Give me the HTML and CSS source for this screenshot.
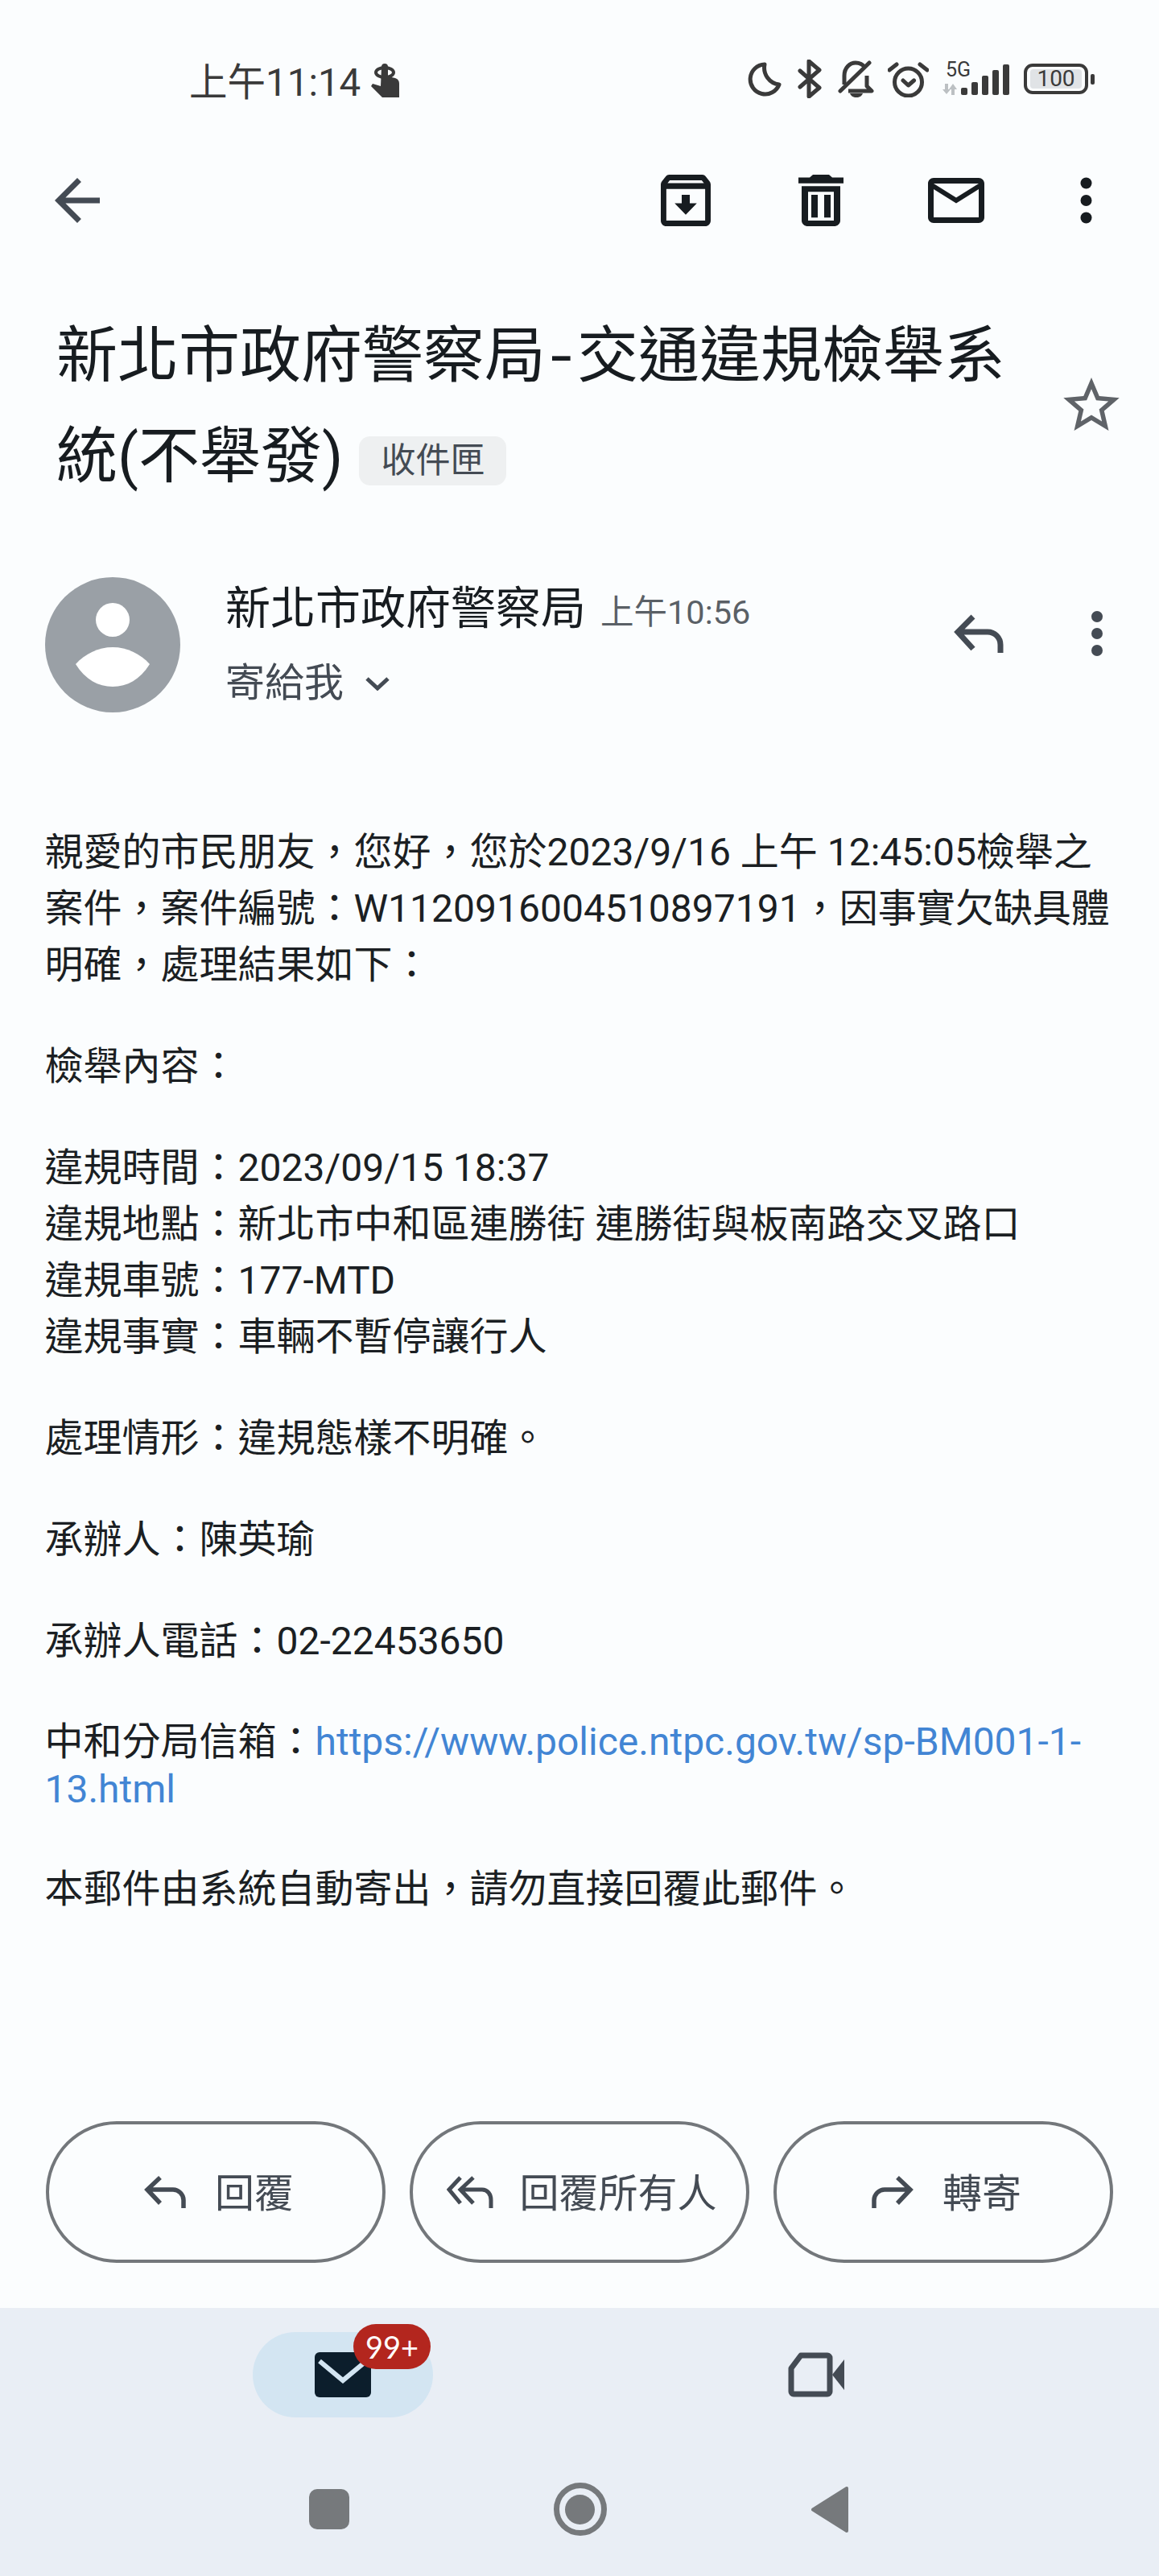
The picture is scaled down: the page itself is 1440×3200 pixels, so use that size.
FILE: index.html
```html
<!DOCTYPE html>
<html lang="zh-TW">
<head>
<meta charset="utf-8">
<title>新北市政府警察局-交通違規檢舉系統(不舉發)</title>
<link rel="stylesheet" href="styles.css">
</head>
<body>
<div class="screen">
  <header class="status">
    <div class="clock">上午11:14</div>
    <svg class="hand" viewBox="0 0 35 42" width="35" height="42"><ellipse cx="17" cy="11" rx="11" ry="6" fill="none" stroke="#3a3a3a" stroke-width="4"/><path fill="#3a3a3a" d="M13 4a4 4 0 0 1 8 0v12l9 2c3 1 5 3 5 7v17H14L0 28l2-3 10 3z"/></svg>
    <div class="status-icons">
      <svg class="si moon" viewBox="0 0 43 43" width="43" height="43"><path fill="none" stroke="#3a3a3a" stroke-width="5" stroke-linejoin="round" d="M22 3A18.500 18.500 0 1 0 40 28 21 21 0 0 1 22 3Z"/></svg>
      <svg class="si bt" viewBox="0 0 30 48" width="30" height="48"><path fill="none" stroke="#3a3a3a" stroke-width="5" stroke-linecap="round" stroke-linejoin="round" d="M3 14 27 35 14 46V2L27 13 3 34"/></svg>
      <svg class="si bell" viewBox="0 0 45 46" width="45" height="46"><path fill="none" stroke="#3a3a3a" stroke-width="5" stroke-linejoin="round" d="M8 30V19C8 9 15 3 22 3c5 0 9 2 12 6M36 19v13l6 6H13"/><path fill="none" stroke="#3a3a3a" stroke-width="5" stroke-linecap="round" d="M3 38 39 3"/><path fill="#3a3a3a" d="M15 41h16c-1 3-4 5-8 5s-7-2-8-5z"/></svg>
      <svg class="si alarm" viewBox="0 0 51 45" width="51" height="45"><circle cx="25.500" cy="26" r="17" fill="none" stroke="#3a3a3a" stroke-width="5"/><path fill="none" stroke="#3a3a3a" stroke-width="5" stroke-linecap="round" stroke-linejoin="round" d="M19 24l6.500 6 7-6M2 11l9-7M40 4l9 7"/></svg>
      <div class="net">
        <span class="g5">5G</span>
        <svg class="arrows" viewBox="0 0 20 14" width="20" height="14"><path fill="#bcc0c3" d="M4 0h4v7h3l-5 6-5-6h3zM12 14V7H9l5-7 5 7h-3v7z"/></svg>
        <svg class="bars" viewBox="0 0 60 38" width="60" height="38"><g fill="#3a3a3a"><rect x="0" y="29" width="8" height="9" rx="2"/><rect x="13" y="22" width="8" height="16" rx="2"/><rect x="26" y="14" width="8" height="24" rx="2"/><rect x="39" y="7" width="8" height="31" rx="2"/><rect x="52" y="0" width="8" height="38" rx="2"/></g></svg>
      </div>
      <div class="battery"><span class="batt-body"><span class="batt-fill">100</span></span><span class="batt-tip"></span></div>
    </div>
  </header>

  <nav class="toolbar">
    <svg class="back" viewBox="4 4 16 16" width="56" height="56"><path fill="#444b54" d="M20 11H7.830l5.590-5.590L12 4l-8 8 8 8 1.410-1.410L7.830 13H20v-2z"/></svg>
    <svg class="tb-archive" viewBox="3 3 18 18" width="62" height="64" preserveAspectRatio="none"><path fill="#171c20" d="M20.540 5.230l-1.390-1.680C18.880 3.210 18.470 3 18 3H6c-.47 0-.88.21-1.160.55L3.460 5.230C3.170 5.570 3 6.020 3 6.500V19c0 1.100.9 2 2 2h14c1.100 0 2-.9 2-2V6.500c0-.48-.17-.93-.46-1.270zM6.240 5h11.520l.81.97H5.440l.8-.97zM5 19V8h14v11H5zm8.450-9h-2.900v3H8l4 4 4-4h-2.550z"/></svg>
    <svg class="tb-trash" viewBox="5 3 14 18" width="56" height="64" preserveAspectRatio="none"><path fill="#171c20" d="M6 19c0 1.100.9 2 2 2h8c1.100 0 2-.9 2-2V7H6v12zM8 9h8v10H8V9zm7.500-5l-1-1h-5l-1 1H5v2h14V4zM9 10h2v8H9zM13 10h2v8h-2z"/></svg>
    <svg class="tb-mail" viewBox="2 4 20 16" width="70" height="56"><path fill="#171c20" d="M20 4H4c-1.100 0-2 .9-2 2v12c0 1.100.9 2 2 2h16c1.100 0 2-.9 2-2V6c0-1.100-.9-2-2-2zm0 14H4V8l8 5 8-5v10zm-8-7L4 6h16l-8 5z"/></svg>
    <svg class="tb-dots" viewBox="0 0 15 58" width="15" height="58"><g fill="#171c20"><circle cx="7.500" cy="7.500" r="7"/><circle cx="7.500" cy="29" r="7"/><circle cx="7.500" cy="50.500" r="7"/></g></svg>
  </nav>

  <section class="subject">
    <h1 class="title">新北市政府警察局<span class="hyphen">-</span>交通違規檢舉系統(不舉發)<span class="label">收件匣</span></h1>
    <svg class="star" viewBox="2 2 20 19" width="70" height="66"><path fill="#5f6368" d="M22 9.240l-7.190-.62L12 2 9.190 8.630 2 9.240l5.460 4.730L5.820 21 12 17.270 18.180 21l-1.630-7.030L22 9.240zM12 15.400l-3.760 2.270 1-4.280-3.320-2.880 4.380-.38L12 6.100l1.710 4.040 4.380.38-3.320 2.880 1 4.280L12 15.400z"/></svg>
  </section>

  <section class="sender">
    <svg class="avatar" viewBox="0 0 168 168" width="168" height="168"><circle cx="84" cy="84" r="84" fill="#9aa0a6"/><circle cx="84" cy="53" r="21" fill="#fff"/><path fill="#fff" d="M38 108C50 95 66 87 84 87s34 8 46 21c-12 19-28 28-46 28s-34-9-46-28z"/></svg>
    <div class="sender-info">
      <div class="sender-top"><span class="sender-name">新北市政府警察局</span><span class="sender-time">上午10:56</span></div>
      <div class="sender-to"><span>寄給我</span><svg class="chev" viewBox="0 0 30 18" width="30" height="18"><path fill="none" stroke="#444b54" stroke-width="5" d="M2 3l13 12L28 3"/></svg></div>
    </div>
    <svg class="msg-reply" viewBox="0 0 62 48" width="62" height="48"><path fill="none" stroke="#444b54" stroke-width="7" d="M24 3 5 22l19 21M5 22h37c9 0 16 7 16 16v10"/></svg>
    <svg class="msg-dots" viewBox="0 0 14 56" width="14" height="56"><g fill="#444b54"><circle cx="7" cy="7" r="7"/><circle cx="7" cy="28" r="7"/><circle cx="7" cy="49" r="7"/></g></svg>
  </section>

  <main class="body">
    <p>親愛的市民朋友，您好，您於2023/9/16 上午 12:45:05檢舉之案件，案件編號：W1120916004510897191，因事實欠缺具體明確，處理結果如下：</p>
    <p>檢舉內容：</p>
    <p>違規時間：2023/09/15 18:37<br>違規地點：新北市中和區連勝街 連勝街與板南路交叉路口<br>違規車號：177-MTD<br>違規事實：車輛不暫停讓行人</p>
    <p>處理情形：違規態樣不明確。</p>
    <p>承辦人：陳英瑜</p>
    <p>承辦人電話：02-22453650</p>
    <p class="link-para">中和分局信箱：<a class="link" href="#">https://www.police.ntpc.gov.tw/sp-BM001-1-13.html</a></p>
    <p>本郵件由系統自動寄出，請勿直接回覆此郵件。</p>
  </main>

  <section class="actions">
    <div class="btn"><svg viewBox="0 0 52 41" width="52" height="41"><path fill="none" stroke="#444b54" stroke-width="5.500" d="M20 3 4 18l16 17M4 18h32c7 0 13 6 13 13v10"/></svg><span>回覆</span></div>
    <div class="btn btn-all"><svg viewBox="0 0 58 41" width="58" height="41"><path fill="none" stroke="#444b54" stroke-width="5" d="M17 3 3 18l14 17M33 3 17 18l16 17M17 18h27c7 0 11 6 11 13v10"/></svg><span>回覆所有人</span></div>
    <div class="btn"><svg viewBox="0 0 52 41" width="52" height="41"><path fill="none" stroke="#444b54" stroke-width="5.500" d="M32 3l16 15-16 17M48 18H16C9 18 3 24 3 31v10"/></svg><span>轉寄</span></div>
  </section>

  <footer class="bottom">
    <div class="tabs">
      <div class="tab">
        <div class="pill">
          <svg viewBox="0 0 70 56" width="70" height="56"><rect width="70" height="56" rx="6" fill="#0c1e2c"/><path fill="none" stroke="#d3e5f2" stroke-width="6" d="M6 11l29 24 29-24"/></svg>
          <span class="badge">99+</span>
        </div>
      </div>
      <div class="tab">
        <svg viewBox="0 0 70 56" width="70" height="56"><path fill="none" stroke="#444b54" stroke-width="7" stroke-linejoin="round" d="M16 4h33a3 3 0 0 1 3 3v42a3 3 0 0 1-3 3H7a3 3 0 0 1-3-3V20z"/><path fill="#444b54" d="M55 28 70 9v38z"/></svg>
      </div>
    </div>
    <div class="sysnav">
      <span class="sys-square"></span>
      <span class="sys-home"><span class="sys-home-dot"></span></span>
      <svg viewBox="0 0 46 57" width="46" height="57"><path fill="#76797c" stroke="#76797c" stroke-width="4" stroke-linejoin="round" d="M2 28.500 44 2v53z"/></svg>
    </div>
  </footer>
</div>
</body>
</html>
```

FILE: styles.css
```css
* { box-sizing: border-box; }
html, body { margin: 0; padding: 0; }
body {
  background: #fbfdfe;
  font-family: Roboto, "Noto Sans CJK TC", sans-serif;
  color: #1b1f23;
}
.screen {
  width: 1440px;
  height: 3200px;
  display: flex;
  flex-direction: column;
  overflow: hidden;
}
svg { display: block; flex: none; }

/* status bar */
.status {
  height: 189px;
  display: flex;
  align-items: flex-start;
  padding: 70px 80px 0 235px;
}
.clock {
  margin-top: 3px;
  font-size: 47.500px;
  line-height: 60px;
  color: #3a3a3a;
}
.hand { margin: 9px 0 0 13px; }
.status-icons {
  margin-left: auto;
  display: flex;
  align-items: center;
  height: 56px;
}
.bt { margin-left: 20px; }
.bell { margin-left: 20px; }
.alarm { margin-left: 17px; }
.net {
  position: relative;
  width: 84px;
  height: 46px;
  margin-left: 16px;
}
.g5 {
  position: absolute;
  left: 5px;
  top: 0;
  font-size: 25px;
  line-height: 24px;
  color: #3a3a3a;
}
.arrows { position: absolute; left: 0; top: 29px; }
.bars { position: absolute; left: 24px; top: 5px; }
.battery {
  display: flex;
  align-items: center;
  margin-left: 18px;
}
.batt-body {
  width: 80px;
  height: 38px;
  border: 4px solid #3a3a3a;
  border-radius: 11px;
  padding: 3px 4px;
  display: flex;
}
.batt-fill {
  flex: 1;
  background: #e0e3e6;
  border-radius: 4px;
  font-size: 28px;
  line-height: 24px;
  text-align: center;
  color: #3a3a3a;
}
.batt-tip {
  width: 5px;
  height: 13px;
  margin-left: 3px;
  background: #3a3a3a;
  border-radius: 2px;
}

/* toolbar */
.toolbar {
  height: 120px;
  display: flex;
  align-items: center;
  padding: 0 83px 0 68px;
}
.tb-archive { margin-left: auto; }
.tb-trash { margin-left: 109px; }
.tb-mail { margin-left: 105px; }
.tb-dots { margin-left: 119px; }

/* subject */
.subject {
  margin-top: 71px;
  height: 250px;
  display: flex;
  align-items: flex-start;
  padding: 0 49px 0 70px;
}
.title {
  margin: 0;
  flex: 1;
  font-size: 76px;
  font-weight: 400;
  line-height: 125px;
  color: #171c20;
}
.hyphen {
  display: inline-block;
  padding: 0 9px;
  transform: scaleX(1.250);
}
.label {
  display: inline-block;
  margin-left: 20px;
  padding: 0 27px;
  height: 61px;
  line-height: 60px;
  font-size: 43px;
  vertical-align: 6px;
  background: #eef0f1;
  border-radius: 14px;
  color: #444b54;
}
.star { margin-top: 89px; margin-left: 11px; }

/* sender */
.sender {
  margin-top: 87px;
  display: flex;
  align-items: flex-start;
  padding-left: 56px;
}
.sender-info { margin-left: 56px; flex: 1; }
.sender-top {
  display: flex;
  align-items: baseline;
  height: 76px;
  line-height: 78px;
}
.sender-name { font-size: 56px; color: #171c20; }
.sender-time { font-size: 41.500px; margin-left: 18px; color: #5a6066; }
.sender-to {
  margin-top: 21px;
  display: flex;
  align-items: center;
  font-size: 49px;
  line-height: 70px;
  color: #444b54;
}
.chev { margin-left: 27px; }
.msg-reply { margin-top: 46px; }
.msg-dots { margin: 42px 70px 0 109px; }

/* body */
.body {
  flex: 1;
  margin-top: 139px;
  padding: 0 57px 0 55.500px;
  font-size: 48px;
  line-height: 70px;
}
.body p { margin: 0 0 56px; }
.body .link-para {
  line-height: 59px;
  padding-top: 4px;
  margin-bottom: 60px;
}
.link { color: #4285d4; text-decoration: none; }

/* action buttons */
.actions {
  display: flex;
  gap: 30px;
  padding: 0 56px 56px 57px;
}
.btn {
  width: 422px;
  height: 176px;
  border: 4px solid #73777b;
  border-radius: 88px;
  padding: 0 0 5px 8px;
  display: flex;
  align-items: center;
  justify-content: center;
  gap: 36px;
  font-size: 49px;
  color: #444b54;
}
.btn svg { margin-top: 4px; }
.btn-all { gap: 32px; padding-left: 6px; }

/* bottom nav */
.bottom {
  height: 333px;
  background: #e9eef5;
}
.tabs {
  display: flex;
  padding: 30px 132px 0;
  height: 136px;
}
.tab {
  width: 588px;
  height: 106px;
  display: flex;
  align-items: center;
  justify-content: center;
}
.pill {
  position: relative;
  width: 224px;
  height: 106px;
  border-radius: 53px;
  background: #d3e5f2;
  display: flex;
  align-items: center;
  justify-content: center;
}
.badge {
  position: absolute;
  left: 125px;
  top: -10px;
  width: 96px;
  height: 56px;
  border-radius: 28px;
  background: #b3261e;
  color: #fff;
  font-family: Lato, sans-serif;
  font-size: 38px;
  line-height: 56px;
  text-align: center;
}
.sysnav {
  margin-top: 81px;
  display: flex;
  align-items: center;
  justify-content: center;
  gap: 254px;
  padding-right: 3px;
}
.sys-square {
  width: 50px;
  height: 50px;
  border-radius: 10px;
  background: #76797c;
}
.sys-home {
  width: 66px;
  height: 66px;
  border: 7px solid #76797c;
  border-radius: 50%;
  display: flex;
  align-items: center;
  justify-content: center;
}
.sys-home-dot {
  width: 37px;
  height: 37px;
  border-radius: 50%;
  background: #76797c;
}
```
